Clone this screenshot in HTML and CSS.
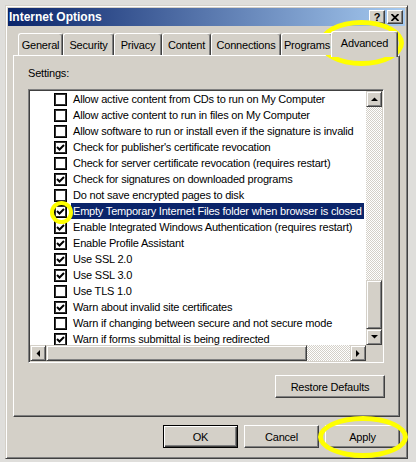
FILE: index.html
```html
<!DOCTYPE html>
<html>
<head>
<meta charset="utf-8">
<title>Internet Options</title>
<link rel="stylesheet" href="styles.css">
</head>
<body>
<div class="window">
  <div class="titlebar">
    <span class="title">Internet Options</span>
    <div class="tbtns">
      <span class="tbtn help">?</span>
      <span class="tbtn close"><svg width="8" height="7" viewBox="0 0 8 7"><path d="M0.5 0 L7.5 7 M7.5 0 L0.5 7" stroke="#000" stroke-width="1.8"/></svg></span>
    </div>
  </div>
  <div class="content">
    <div class="tabs">
      <div class="tab tab-general">General</div>
      <div class="tab tab-security">Security</div>
      <div class="tab tab-privacy">Privacy</div>
      <div class="tab tab-content">Content</div>
      <div class="tab tab-connections">Connections</div>
      <div class="tab tab-programs">Programs</div>
      <div class="tab tab-advanced selected">Advanced</div>
    </div>
    <div class="panel">
      <div class="label">Settings:</div>
      <div class="listbox">
        <div class="items">
          <div class="row"><span class="cb"></span><span class="txt">Allow active content from CDs to run on My Computer</span></div>
          <div class="row"><span class="cb"></span><span class="txt">Allow active content to run in files on My Computer</span></div>
          <div class="row"><span class="cb"></span><span class="txt">Allow software to run or install even if the signature is invalid</span></div>
          <div class="row"><span class="cb checked"><svg width="9" height="9" viewBox="0 0 9 9"><path d="M1 4 L3.5 6.5 L8 2" fill="none" stroke="#000" stroke-width="2"/></svg></span><span class="txt">Check for publisher's certificate revocation</span></div>
          <div class="row"><span class="cb"></span><span class="txt">Check for server certificate revocation (requires restart)</span></div>
          <div class="row"><span class="cb checked"><svg width="9" height="9" viewBox="0 0 9 9"><path d="M1 4 L3.5 6.5 L8 2" fill="none" stroke="#000" stroke-width="2"/></svg></span><span class="txt">Check for signatures on downloaded programs</span></div>
          <div class="row"><span class="cb"></span><span class="txt">Do not save encrypted pages to disk</span></div>
          <div class="row selected"><span class="cb checked"><svg width="9" height="9" viewBox="0 0 9 9"><path d="M1 4 L3.5 6.5 L8 2" fill="none" stroke="#000" stroke-width="2"/></svg></span><span class="txt">Empty Temporary Internet Files folder when browser is closed</span></div>
          <div class="row"><span class="cb checked"><svg width="9" height="9" viewBox="0 0 9 9"><path d="M1 4 L3.5 6.5 L8 2" fill="none" stroke="#000" stroke-width="2"/></svg></span><span class="txt">Enable Integrated Windows Authentication (requires restart)</span></div>
          <div class="row"><span class="cb checked"><svg width="9" height="9" viewBox="0 0 9 9"><path d="M1 4 L3.5 6.5 L8 2" fill="none" stroke="#000" stroke-width="2"/></svg></span><span class="txt">Enable Profile Assistant</span></div>
          <div class="row"><span class="cb checked"><svg width="9" height="9" viewBox="0 0 9 9"><path d="M1 4 L3.5 6.5 L8 2" fill="none" stroke="#000" stroke-width="2"/></svg></span><span class="txt">Use SSL 2.0</span></div>
          <div class="row"><span class="cb checked"><svg width="9" height="9" viewBox="0 0 9 9"><path d="M1 4 L3.5 6.5 L8 2" fill="none" stroke="#000" stroke-width="2"/></svg></span><span class="txt">Use SSL 3.0</span></div>
          <div class="row"><span class="cb"></span><span class="txt">Use TLS 1.0</span></div>
          <div class="row"><span class="cb checked"><svg width="9" height="9" viewBox="0 0 9 9"><path d="M1 4 L3.5 6.5 L8 2" fill="none" stroke="#000" stroke-width="2"/></svg></span><span class="txt">Warn about invalid site certificates</span></div>
          <div class="row"><span class="cb"></span><span class="txt">Warn if changing between secure and not secure mode</span></div>
          <div class="row"><span class="cb checked"><svg width="9" height="9" viewBox="0 0 9 9"><path d="M1 4 L3.5 6.5 L8 2" fill="none" stroke="#000" stroke-width="2"/></svg></span><span class="txt">Warn if forms submittal is being redirected</span></div>
        </div>
        <div class="vscroll">
          <span class="sbtn"><svg width="7" height="4" viewBox="0 0 7 4"><polygon points="0,4 7,4 3.5,0.5" fill="#000"/></svg></span>
          <div class="vtrack"><span class="vthumb"></span></div>
          <span class="sbtn"><svg width="7" height="4" viewBox="0 0 7 4"><polygon points="0,0 7,0 3.5,3.5" fill="#000"/></svg></span>
        </div>
        <div class="hscroll">
          <span class="sbtn"><svg width="4" height="7" viewBox="0 0 4 7"><polygon points="4,0 4,7 0.5,3.5" fill="#000"/></svg></span>
          <div class="htrack"><span class="hthumb"></span></div>
          <span class="sbtn"><svg width="4" height="7" viewBox="0 0 4 7"><polygon points="0,0 0,7 3.5,3.5" fill="#000"/></svg></span>
        </div>
        <div class="corner"></div>
      </div>
      <div class="restore-row"><button class="btn restore">Restore Defaults</button></div>
    </div>
    <div class="actions">
      <button class="btn default">OK</button>
      <button class="btn">Cancel</button>
      <button class="btn">Apply</button>
    </div>
  </div>
</div>
<div class="ring ring-tab"></div>
<div class="ring ring-cb"></div>
<div class="ring ring-apply"></div>
</body>
</html>
```
FILE: styles.css
```css
html, body {
  margin: 0;
}
body {
  box-sizing: border-box;
  width: 416px;
  height: 462px;
  padding: 5px 0 0 5px;
  overflow: hidden;
  background: #dfdedb;
  font-family: "Liberation Sans", Arial, sans-serif;
  font-size: 11px;
  letter-spacing: -0.2px;
  color: #000;
}
.window {
  box-sizing: border-box;
  width: 403px;
  height: 454px;
  background: #d4d0c8;
  border: 1px solid;
  border-color: #d4d0c8 #404040 #404040 #d4d0c8;
  box-shadow: inset 1px 1px #fff, inset -1px -1px #808080;
  padding: 2px;
  display: flex;
  flex-direction: column;
}
.titlebar {
  height: 18px;
  flex: none;
  display: flex;
  align-items: center;
  justify-content: space-between;
  padding: 0 2px 0 1px;
  background: linear-gradient(to right, #0a246a, #a6caf0);
}
.title {
  color: #fff;
  font-weight: bold;
  font-size: 12px;
  letter-spacing: 0;
}
.tbtns {
  display: flex;
  gap: 2px;
}
.tbtn {
  box-sizing: border-box;
  width: 16px;
  height: 14px;
  display: flex;
  align-items: center;
  justify-content: center;
  background: #d4d0c8;
  border: 1px solid;
  border-color: #fff #404040 #404040 #fff;
  box-shadow: inset -1px -1px #808080;
  font-weight: bold;
  font-size: 11px;
  line-height: 1;
}
.content {
  flex: 1;
  display: flex;
  flex-direction: column;
  padding: 0 5px;
}
.tabs {
  position: relative;
  z-index: 1;
  display: flex;
  align-items: flex-end;
  height: 26px;
  margin: 5px 0 -2px 0;
  padding-left: 5px;
}
.tab {
  box-sizing: border-box;
  height: 22px;
  margin-bottom: 2px;
  display: flex;
  align-items: center;
  justify-content: center;
  white-space: nowrap;
  background: #d4d0c8;
  border-top: 1px solid #fff;
  border-left: 1px solid #fff;
  border-right: 1px solid #404040;
  border-radius: 3px 3px 0 0;
  box-shadow: inset -1px 0 #808080;
}
.tab-general { width: 45px; }
.tab-security { width: 51px; }
.tab-privacy { width: 48px; }
.tab-content { width: 49px; }
.tab-connections { width: 70px; }
.tab-programs { width: 52px; }
.tab.selected {
  width: 67px;
  height: 26px;
  margin: 0 0 0 -2px;
  padding-bottom: 3px;
}
.panel {
  box-sizing: border-box;
  height: 362px;
  flex: none;
  border: 1px solid;
  border-color: #fff #404040 #404040 #fff;
  box-shadow: inset -1px -1px #808080;
  padding: 11px 0 0 14px;
  display: flex;
  flex-direction: column;
  align-items: flex-start;
}
.label {
  line-height: 13px;
  margin-bottom: 9px;
}
.listbox {
  box-sizing: border-box;
  width: 356px;
  height: 274px;
  background: #fff;
  border: 1px solid;
  border-color: #808080 #fff #fff #808080;
  box-shadow: inset 1px 1px #404040, inset -1px -1px #d4d0c8;
  padding: 1px;
  display: grid;
  grid-template-columns: 336px 16px;
  grid-template-rows: 254px 16px;
}
.items {
  overflow: hidden;
  white-space: nowrap;
}
.row {
  height: 16px;
  display: flex;
  align-items: flex-start;
  padding-left: 24px;
}
.cb {
  box-sizing: border-box;
  flex: none;
  width: 13px;
  height: 13px;
  margin-top: 2px;
  margin-right: 4px;
  background: #fff;
  border: 1px solid #000;
  box-shadow: inset 1px 1px #333, inset -1px -1px #333;
  display: flex;
  align-items: center;
  justify-content: center;
}
.txt {
  height: 16px;
  line-height: 16px;
  padding: 0 2px;
}
.row.selected .txt {
  background: #0a246a;
  color: #fff;
}
.vscroll {
  display: flex;
  flex-direction: column;
}
.hscroll {
  display: flex;
}
.sbtn, .vthumb, .hthumb {
  box-sizing: border-box;
  background: #d4d0c8;
  border: 1px solid;
  border-color: #d4d0c8 #404040 #404040 #d4d0c8;
  box-shadow: inset 1px 1px #fff, inset -1px -1px #808080;
}
.sbtn {
  flex: none;
  width: 16px;
  height: 16px;
  display: flex;
  align-items: center;
  justify-content: center;
}
.vtrack, .htrack {
  flex: 1;
  display: flex;
  background: #fff repeating-conic-gradient(#d4d0c8 0 25%, #fff 0 50%) 0 0 / 2px 2px;
}
.vtrack {
  flex-direction: column;
  justify-content: flex-end;
}
.vthumb {
  height: 49px;
}
.hthumb {
  width: 261px;
}
.corner {
  background: #d4d0c8;
}
.restore-row {
  width: 356px;
  display: flex;
  justify-content: flex-end;
  margin-top: 12px;
}
.btn {
  box-sizing: border-box;
  width: 75px;
  height: 23px;
  padding: 0;
  font: inherit;
  letter-spacing: inherit;
  color: #000;
  background: #d4d0c8;
  border: 1px solid;
  border-color: #fff #404040 #404040 #fff;
  box-shadow: inset -1px -1px #808080;
}
.btn.restore {
  width: 110px;
  margin-right: -1px;
}
.btn.default {
  border: 1px solid #000;
  box-shadow: inset 1px 1px #fff, inset -1px -1px #404040, inset -2px -2px #808080;
}
.actions {
  display: flex;
  justify-content: flex-end;
  gap: 6px;
  margin-top: 8px;
}
.ring {
  position: absolute;
  box-sizing: border-box;
  border: 5px solid #ffff00;
  border-radius: 50%;
}
.ring-tab {
  left: 319px;
  top: 20px;
  width: 85px;
  height: 46px;
}
.ring-cb {
  left: 50px;
  top: 201px;
  width: 23px;
  height: 23px;
  border-width: 4px;
}
.ring-apply {
  left: 318px;
  top: 416px;
  width: 90px;
  height: 42px;
}
```
